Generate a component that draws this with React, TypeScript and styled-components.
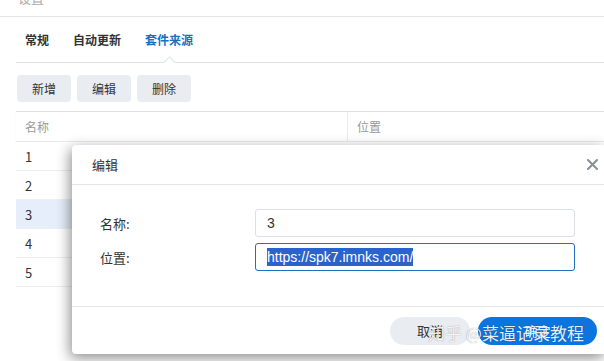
import React from 'react';
import styled, { createGlobalStyle } from 'styled-components';

const GlobalStyle = createGlobalStyle`
  html, body {
    margin: 0;
    padding: 0;
    background: #fff;
  }
  body {
    font-family: "Noto Sans CJK SC", "Noto Sans", sans-serif;
    color: #333;
  }
`;

const Page = styled.div`
  position: relative;
  width: 604px;
  height: 361px;
  overflow: hidden;
  background: #fff;
`;

const TitleBar = styled.div`
  height: 16px;
  border-bottom: 1px solid #e4e6ea;
  overflow: hidden;
  padding-left: 18px;
`;

const WindowTitle = styled.div`
  margin-top: -12px;
  font-size: 13px;
  color: #aaa;
`;

const Main = styled.div`
  padding-left: 16px;
`;

const Tabs = styled.div`
  display: flex;
  gap: 24px;
  height: 45px;
  padding-left: 9px;
  border-bottom: 1px solid #dde1e6;
`;

const Tab = styled.div<{ $active?: boolean }>`
  position: relative;
  display: flex;
  align-items: center;
  font-size: 12px;
  font-weight: 600;
  color: ${p => (p.$active ? '#1a6fc4' : '#333')};

  &::after {
    content: '';
    display: ${p => (p.$active ? 'block' : 'none')};
    position: absolute;
    left: 50%;
    bottom: -5px;
    width: 8px;
    height: 8px;
    margin-left: -4px;
    background: #fff;
    border-left: 1px solid #dde1e6;
    border-top: 1px solid #dde1e6;
    transform: rotate(45deg);
  }
`;

const Toolbar = styled.div`
  display: flex;
  gap: 6px;
  padding: 12px 0 9px 1px;
`;

const ToolButton = styled.div`
  width: 54px;
  height: 27px;
  border-radius: 4px;
  background: #e9edf2;
  display: flex;
  align-items: center;
  justify-content: center;
  font-size: 12px;
  color: #333;
`;

const Table = styled.div`
  border-top: 1px solid #dde1e6;
`;

const HeaderRow = styled.div`
  display: grid;
  grid-template-columns: 331px 1fr;
  height: 29px;
  border-bottom: 1px solid #e8eaed;
  box-shadow: 0 1px 2px rgba(0, 0, 0, 0.05);
`;

const HeaderCell = styled.div<{ $divider?: boolean }>`
  display: flex;
  align-items: center;
  padding-left: 9px;
  font-size: 12px;
  color: #999;
  border-left: ${p => (p.$divider ? '1px solid #e8eaed' : 'none')};
`;

const Row = styled.div<{ $selected?: boolean }>`
  height: 28px;
  display: flex;
  align-items: center;
  padding-left: 9px;
  font-size: 13px;
  color: #333;
  background: ${p => (p.$selected ? '#e5eefa' : '#fff')};
  border-bottom: 1px solid #eceef1;
`;

const Dialog = styled.div`
  position: absolute;
  left: 72px;
  top: 145px;
  width: 534px;
  height: 209px;
  background: #fff;
  border-radius: 4px;
  box-shadow: -2px 4px 14px rgba(0, 0, 0, 0.45);
  display: flex;
  flex-direction: column;
`;

const DialogHeader = styled.div`
  height: 39px;
  display: flex;
  align-items: center;
  justify-content: space-between;
  padding: 0 8px 0 20px;
  border-bottom: 1px solid #e4e6ea;
  font-size: 13px;
  color: #333;
`;

const CloseButton = styled.div`
  display: flex;
  align-items: center;
`;

const DialogBody = styled.div`
  flex: 1;
  padding: 24px 0 0 28px;
  display: flex;
  flex-direction: column;
  gap: 6px;
  border-bottom: 1px solid #e4e6ea;
`;

const FieldRow = styled.div`
  display: grid;
  grid-template-columns: 155px 320px;
  align-items: center;
`;

const Label = styled.div`
  font-size: 13px;
  color: #333;
`;

const Input = styled.div<{ $focused?: boolean }>`
  height: 26px;
  border: 1px solid ${p => (p.$focused ? '#1e70c2' : '#dcdfe4')};
  border-radius: 3px;
  display: flex;
  align-items: center;
  padding-left: 11px;
  font-family: "Liberation Sans", Arial, sans-serif;
  font-size: 14px;
  color: #333;
`;

const Selected = styled.span`
  background: #2a63cc;
  color: #fff;
  line-height: 18px;
`;

const DialogFooter = styled.div`
  height: 47px;
  display: flex;
  align-items: center;
  justify-content: flex-end;
  gap: 8px;
  padding-right: 9px;
`;

const PillButton = styled.div<{ $primary?: boolean; $w: number }>`
  width: ${p => p.$w}px;
  height: 28px;
  border-radius: 14px;
  background: ${p => (p.$primary ? '#0b74de' : '#e9edf2')};
  color: ${p => (p.$primary ? '#fff' : '#333')};
  font-size: 13px;
  display: flex;
  align-items: center;
  justify-content: center;
`;

const Watermark = styled.div`
  position: absolute;
  left: 428px;
  top: 320px;
  font-size: 17px;
  color: rgba(255, 255, 255, 0.92);
  text-shadow: 0 0 1px rgba(0, 0, 0, 0.45);
  white-space: nowrap;
`;

const App: React.FC = () => (
  <Page>
    <GlobalStyle />
    <TitleBar>
      <WindowTitle>设置</WindowTitle>
    </TitleBar>
    <Main>
      <Tabs>
        <Tab>常规</Tab>
        <Tab>自动更新</Tab>
        <Tab $active>套件来源</Tab>
      </Tabs>
      <Toolbar>
        <ToolButton>新增</ToolButton>
        <ToolButton>编辑</ToolButton>
        <ToolButton>删除</ToolButton>
      </Toolbar>
      <Table>
        <HeaderRow>
          <HeaderCell>名称</HeaderCell>
          <HeaderCell $divider>位置</HeaderCell>
        </HeaderRow>
        {['1', '2', '3', '4', '5'].map(n => (
          <Row key={n} $selected={n === '3'}>{n}</Row>
        ))}
      </Table>
    </Main>

    <Dialog>
      <DialogHeader>
        <span>编辑</span>
        <CloseButton>
          <svg width="11" height="11" viewBox="0 0 11 11">
            <path d="M1 1 L10 10 M10 1 L1 10" stroke="#8a8f96" strokeWidth="2" strokeLinecap="round" />
          </svg>
        </CloseButton>
      </DialogHeader>
      <DialogBody>
        <FieldRow>
          <Label>名称:</Label>
          <Input>3</Input>
        </FieldRow>
        <FieldRow>
          <Label>位置:</Label>
          <Input $focused>
            <Selected>https://spk7.imnks.com/</Selected>
          </Input>
        </FieldRow>
      </DialogBody>
      <DialogFooter>
        <PillButton $w={80}>取消</PillButton>
        <PillButton $w={119} $primary>确定</PillButton>
      </DialogFooter>
    </Dialog>

    <Watermark>知乎 @菜逼记录教程</Watermark>
  </Page>
);

export default App;
